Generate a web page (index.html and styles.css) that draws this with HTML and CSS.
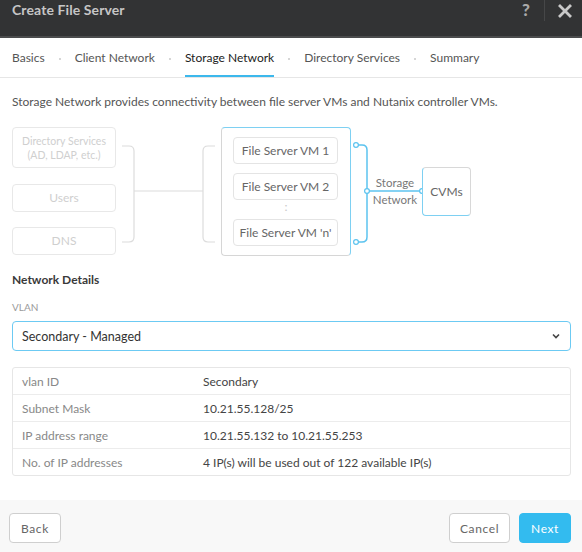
FILE: index.html
```
<!DOCTYPE html>
<html>
<head>
<meta charset="utf-8">
<link rel="stylesheet" href="styles.css">
</head>
<body>
<div class="modal">
  <header class="topbar">
    <div class="title">Create File Server</div>
    <div class="actions">
      <span class="help">?</span>
      <span class="sep"></span>
      <span class="close">
        <svg width="14" height="14" viewBox="0 0 14 14"><path d="M2 2 L12 12 M12 2 L2 12" stroke="#c9c9c9" stroke-width="2.8" stroke-linecap="square"/></svg>
      </span>
    </div>
  </header>
  <nav class="tabs">
    <span class="tab">Basics</span><span class="dot"></span>
    <span class="tab">Client Network</span><span class="dot"></span>
    <span class="tab active">Storage Network</span><span class="dot"></span>
    <span class="tab">Directory Services</span><span class="dot"></span>
    <span class="tab">Summary</span>
  </nav>
  <main class="content">
    <p class="desc">Storage Network provides connectivity between file server VMs and Nutanix controller VMs.</p>
    <div class="diagram">
      <svg class="wires" width="560" height="135" viewBox="0 0 560 135">
        <g fill="none" stroke="#dcdcdc" stroke-width="1.2">
          <path d="M110 21 H117 Q122 21 122 26 V112 Q122 117 117 117 H110"/>
          <path d="M122 66 H191"/>
          <path d="M203 21 H196 Q191 21 191 26 V112 Q191 117 196 117 H203"/>
        </g>
        <g fill="none" stroke="#5cc3ef" stroke-width="1.5">
          <path d="M346 20 H350 Q355 20 355 25 V112 Q355 117 350 117 H346"/>
          <path d="M355 66 H410"/>
        </g>
        <g fill="#fff" stroke="#5cc3ef" stroke-width="1.2">
          <circle cx="344" cy="20" r="2.4"/>
          <circle cx="344" cy="117" r="2.4"/>
          <circle cx="355" cy="66" r="2.4"/>
          <circle cx="410" cy="66" r="2.4"/>
        </g>
      </svg>
      <div class="node faded dir">Directory Services<br>(AD, LDAP, etc.)</div>
      <div class="node faded users">Users</div>
      <div class="node faded dns">DNS</div>
      <div class="group"></div>
      <div class="node vm vm1">File Server VM 1</div>
      <div class="node vm vm2">File Server VM 2</div>
      <div class="vdots">:</div>
      <div class="node vm vmn">File Server VM 'n'</div>
      <div class="netlabel">Storage<br>Network</div>
      <div class="node cvms">CVMs</div>
    </div>
    <h3 class="section">Network Details</h3>
    <div class="label">VLAN</div>
    <div class="select">
      <span>Secondary - Managed</span>
      <svg width="8" height="6" viewBox="0 0 8 6"><path d="M1 1.5 L4 4.5 L7 1.5" fill="none" stroke="#444" stroke-width="1.6"/></svg>
    </div>
    <div class="details">
      <div class="row"><span class="k">vlan ID</span><span class="v">Secondary</span></div>
      <div class="row"><span class="k">Subnet Mask</span><span class="v">10.21.55.128/25</span></div>
      <div class="row"><span class="k">IP address range</span><span class="v">10.21.55.132 to 10.21.55.253</span></div>
      <div class="row"><span class="k">No. of IP addresses</span><span class="v">4 IP(s) will be used out of 122 available IP(s)</span></div>
    </div>
  </main>
  <footer class="footer">
    <button class="btn back">Back</button>
    <div class="right">
      <button class="btn">Cancel</button>
      <button class="btn primary">Next</button>
    </div>
  </footer>
</div>
</body>
</html>
```
FILE: styles.css
```
* { box-sizing: border-box; }
html, body { margin: 0; padding: 0; }
body {
  font-family: Lato, "Open Sans", sans-serif;
  color: #333;
  background: #fff;
  width: 582px;
  height: 552px;
  overflow: hidden;
}
.modal {
  display: flex;
  flex-direction: column;
  height: 552px;
}
.topbar {
  height: 38px;
  background: #323334;
  border-bottom: 2px solid #4b4c4d;
  display: flex;
  justify-content: space-between;
  align-items: flex-start;
  padding: 0 10px 0 12px;
}
.title {
  color: #c6c6c6;
  font-size: 14px;
  font-weight: 700;
  line-height: 20px;
  letter-spacing: 0.1px;
}
.actions {
  display: flex;
  align-items: flex-start;
  height: 20px;
}
.help {
  color: #a9a9a9;
  font-size: 17px;
  font-weight: 900;
  line-height: 20px;
  margin-right: 14px;
}
.sep {
  width: 1px;
  height: 21px;
  background: #464748;
  margin-right: 13px;
}
.close {
  display: flex;
  align-items: center;
  height: 20px;
  padding-top: 1px;
}
.tabs {
  height: 40px;
  border-bottom: 1px solid #e6e6e6;
  display: flex;
  align-items: stretch;
  gap: 14px;
  padding-left: 12px;
}
.tab {
  font-size: 12px;
  color: #555;
  display: flex;
  align-items: center;
  border-bottom: 2px solid transparent;
  padding-top: 1px;
}
.tab.active {
  color: #222;
  border-bottom-color: #3cb8ec;
}
.dot {
  width: 2px;
  height: 2px;
  background: #d6d6d6;
  align-self: center;
  margin-top: 3px;
}
.content {
  padding: 0 11px 0 12px;
}
.desc {
  margin: 16px 0 0;
  font-size: 12px;
  line-height: 16px;
  color: #555;
}
.diagram {
  position: relative;
  height: 135px;
  margin-top: 15px;
}
.wires {
  position: absolute;
  left: 0;
  top: 0;
}
.node {
  position: absolute;
  display: flex;
  align-items: center;
  justify-content: center;
  text-align: center;
  border: 1px solid #e2e2e2;
  border-radius: 4px;
  font-size: 12px;
  line-height: 14px;
  color: #666;
  background: #fff;
}
.faded { color: #cfcfcf; border-color: #e8e8e8; }
.dir { left: 0; top: 2px; width: 104px; height: 41px; font-size: 10.5px; line-height: 14px; }
.users { left: 0; top: 59px; width: 104px; height: 28px; }
.dns { left: 0; top: 102px; width: 104px; height: 28px; }
.group {
  position: absolute;
  left: 209px;
  top: 2px;
  width: 130px;
  height: 129px;
  border: 1.5px solid #d6d6d6;
  border-top-color: #7ed0f2;
  border-right-color: #7ed0f2;
  border-radius: 4px;
}
.vm { left: 221px; width: 105px; height: 27px; border-color: #e4e4e4; }
.vm1 { top: 12px; }
.vm2 { top: 48px; }
.vmn { top: 94px; }
.vdots {
  position: absolute;
  left: 271px;
  top: 75px;
  width: 6px;
  text-align: center;
  color: #c8c8c8;
  font-size: 12px;
  line-height: 14px;
}
.netlabel {
  position: absolute;
  left: 357px;
  top: 49px;
  width: 52px;
  text-align: center;
  font-size: 11.5px;
  line-height: 17px;
  color: #777;
}
.cvms {
  left: 410px;
  top: 42px;
  width: 49px;
  height: 49px;
  border: 1.5px solid #7ed0f2;
  border-top-color: #d8d8d8;
  border-right-color: #d8d8d8;
  color: #666;
}
.section {
  margin: 12px 0 0;
  font-size: 12px;
  line-height: 16px;
  font-weight: 700;
  color: #3a3a3a;
}
.label {
  margin-top: 12px;
  font-size: 10px;
  line-height: 14px;
  color: #9a9a9a;
}
.select {
  margin-top: 7px;
  height: 30px;
  border: 1.5px solid #6ccaf3;
  border-radius: 4px;
  display: flex;
  align-items: center;
  justify-content: space-between;
  padding: 0 10px 0 9px;
  font-size: 12.5px;
  color: #333;
}
.details {
  margin-top: 16px;
  border: 1px solid #e6e6e6;
  border-radius: 3px;
}
.row {
  height: 27px;
  display: flex;
  align-items: center;
  padding-left: 9px;
  font-size: 12px;
  border-top: 1px solid #ececec;
}
.row:first-child { border-top: none; height: 26px; }
.k { width: 181px; color: #888; }
.v { color: #444; }
.footer {
  margin-top: auto;
  height: 52px;
  background: #f8f8f8;
  display: flex;
  justify-content: space-between;
  align-items: flex-start;
  padding: 13px 11px 0 9px;
}
.right { display: flex; gap: 9px; }
.btn {
  height: 30px;
  padding: 0 10px;
  font-family: Lato, "Open Sans", sans-serif;
  font-size: 12px;
  letter-spacing: 0.6px;
  color: #666;
  background: #fff;
  border: 1px solid #cfcfcf;
  border-radius: 4px;
}
.btn.back { padding: 0 11px; }
.btn.primary {
  background: #33bbef;
  border-color: #33bbef;
  color: #fff;
  padding: 0 11px;
}
```
